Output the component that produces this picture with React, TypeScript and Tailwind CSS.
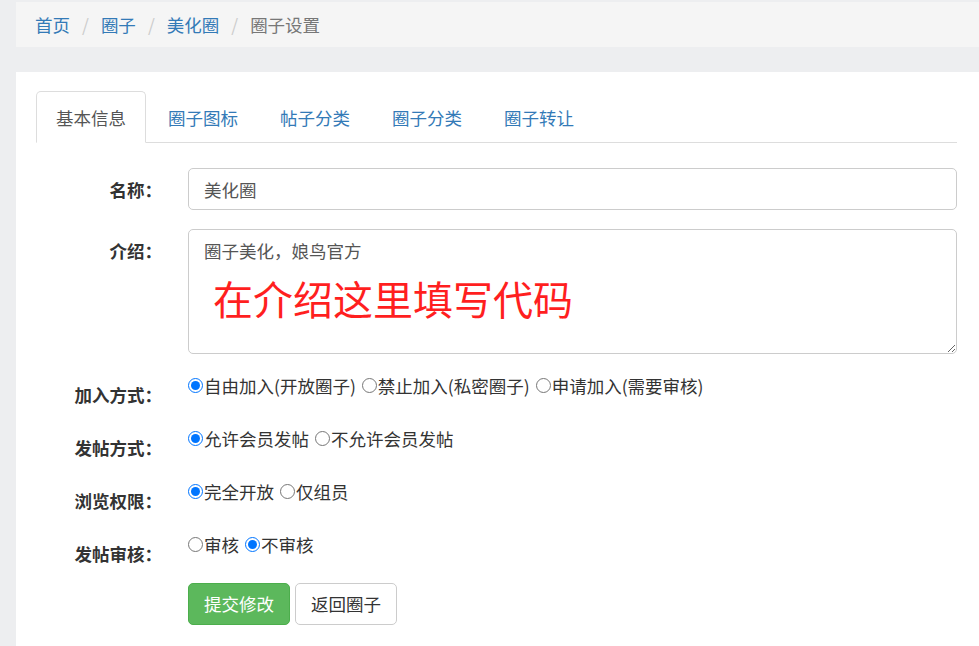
const font = { fontFamily: '"Noto Sans CJK SC", "Noto Sans", sans-serif' };

const crumbs = ["首页", "圈子", "美化圈"];
const tabs = ["基本信息", "圈子图标", "帖子分类", "圈子分类", "圈子转让"];

type Opt = { text: string; checked?: boolean };

const radioRows: { label: string; name: string; options: Opt[] }[] = [
  {
    label: "加入方式：",
    name: "join",
    options: [
      { text: "自由加入(开放圈子)", checked: true },
      { text: "禁止加入(私密圈子)" },
      { text: "申请加入(需要审核)" },
    ],
  },
  {
    label: "发帖方式：",
    name: "post",
    options: [{ text: "允许会员发帖", checked: true }, { text: "不允许会员发帖" }],
  },
  {
    label: "浏览权限：",
    name: "view",
    options: [{ text: "完全开放", checked: true }, { text: "仅组员" }],
  },
  {
    label: "发帖审核：",
    name: "audit",
    options: [{ text: "审核" }, { text: "不审核", checked: true }],
  },
];

function FieldLabel({ children }: { children: React.ReactNode }) {
  return (
    <div className="w-[152px] shrink-0 pr-[26px] pt-[9px] text-right text-[17.5px] leading-[25px] font-bold text-[#333]">
      {children}
    </div>
  );
}

export default function App() {
  return (
    <div className="min-h-screen bg-[#edeef0] pl-4 pt-[2px]" style={font}>
      {/* breadcrumb */}
      <nav className="flex h-[45px] items-center bg-[#f5f5f5] px-[19px] text-[17.5px] leading-[25px]">
        {crumbs.map((c) => (
          <span key={c} className="flex items-center">
            <a className="text-[#337ab7]">{c}</a>
            <span className="px-[12px] text-[#ccc]">/</span>
          </span>
        ))}
        <span className="text-[#777]">圈子设置</span>
      </nav>

      <div className="mt-[25px] bg-white pl-[20px] pr-[22px] pt-[19px] pb-8">
        {/* tabs */}
        <ul className="flex border-b border-[#ddd]">
          {tabs.map((t, i) => (
            <li key={t} className="-mb-px mr-[2px]">
              <a
                className={
                  i === 0
                    ? "block rounded-t-[5px] border border-[#ddd] border-b-white bg-white px-[19px] py-[12.5px] text-[17.5px] leading-[25px] text-[#555]"
                    : "block rounded-t-[5px] border border-transparent px-[19px] py-[12.5px] text-[17.5px] leading-[25px] text-[#337ab7]"
                }
              >
                {t}
              </a>
            </li>
          ))}
        </ul>

        <div className="pt-[25px]">
          {/* name */}
          <div className="mb-[19px] flex">
            <FieldLabel>名称：</FieldLabel>
            <input
              readOnly
              defaultValue="美化圈"
              className="h-[42px] flex-1 rounded-[5px] border border-[#ccc] px-[15px] text-[17.5px] text-[#555] outline-none"
            />
          </div>

          {/* intro */}
          <div className="mb-[19px] flex">
            <FieldLabel>介绍：</FieldLabel>
            <div className="relative flex-1">
              <textarea
                readOnly
                defaultValue="圈子美化，娘鸟官方"
                className="block h-[125px] w-full rounded-[5px] border border-[#ccc] px-[15px] py-[7.5px] text-[17.5px] leading-[25px] text-[#555] outline-none"
              />
              <div className="pointer-events-none absolute left-[25px] top-[49px] text-[40px] leading-[40px] text-[#ff1f1f]">
                在介绍这里填写代码
              </div>
            </div>
          </div>

          {/* radios */}
          {radioRows.map((row) => (
            <div key={row.name} className="mb-[19px] flex">
              <FieldLabel>{row.label}</FieldLabel>
              <div className="flex h-[34px] items-start text-[17.5px] leading-[25px] text-[#333]">
                {row.options.map((o, i) => (
                  <label key={o.text} className={i > 0 ? "ml-[6px] flex items-center" : "flex items-center"}>
                    <input
                      type="radio"
                      name={row.name}
                      defaultChecked={o.checked}
                      className="m-0 mr-[1px] h-[15px] w-[15px] accent-[#0075ff]"
                    />
                    {o.text}
                  </label>
                ))}
              </div>
            </div>
          ))}

          {/* buttons */}
          <div className="-mt-[2px] flex gap-[5px] pl-[152px]">
            <button className="h-[42px] rounded-[5px] border border-[#4cae4c] bg-[#5cb85c] px-[15px] text-[17.5px] text-white">
              提交修改
            </button>
            <button className="h-[42px] rounded-[5px] border border-[#ccc] bg-white px-[15px] text-[17.5px] text-[#333]">
              返回圈子
            </button>
          </div>
        </div>
      </div>
    </div>
  );
}
